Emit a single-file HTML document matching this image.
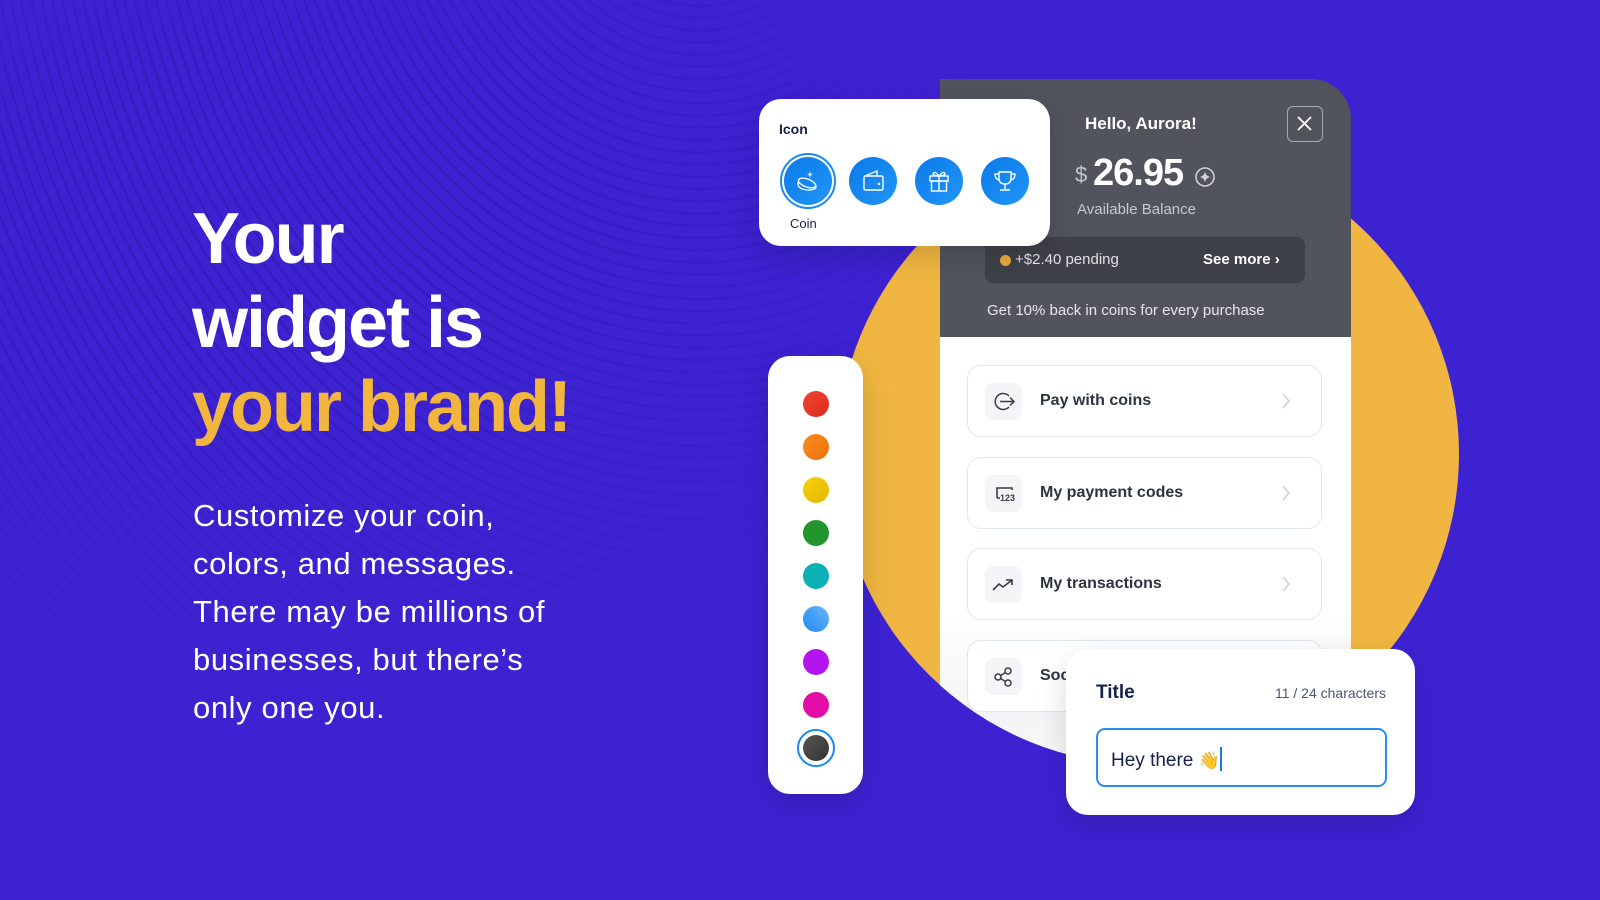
<!DOCTYPE html>
<html><head><meta charset="utf-8"><style>
*{box-sizing:border-box;margin:0;padding:0}
body{width:1600px;height:900px;overflow:hidden;position:relative;font-family:"Liberation Sans",sans-serif;
background:#3d22d2;}
.bg{position:absolute;inset:0;background:repeating-radial-gradient(ellipse at 700px -200px,rgba(30,15,120,.0) 0,rgba(30,15,120,.0) 7px,rgba(30,15,120,.35) 8px,rgba(30,15,120,.0) 10px);
-webkit-mask-image:radial-gradient(ellipse 750px 520px at 250px 200px,#000 30%,transparent 100%);mask-image:radial-gradient(ellipse 750px 520px at 250px 200px,#000 30%,transparent 100%)}
.h{position:absolute;left:192px;top:197px;font-size:72px;font-weight:bold;line-height:84px;letter-spacing:-2px;color:#fff}
.h .y{color:#f2b63f}
.p{position:absolute;left:193px;top:492px;font-size:31px;line-height:48px;color:#fff;width:385px;letter-spacing:.6px}
.circle{position:absolute;left:837px;top:143px;width:622px;height:622px;border-radius:50%;background:#f0b641;overflow:hidden}
.panel{position:absolute;left:940px;top:79px;width:411px;height:258px;border-radius:0 40px 0 0;overflow:hidden}
.head{position:absolute;left:0;top:0;width:100%;height:259px;background:#51535d;color:#fff}
.close{position:absolute;left:347px;top:27px;width:36px;height:36px;border:1.5px solid #a9abb2;border-radius:6px}
.item{position:absolute;left:967px;width:355px;height:72px;border:1.5px solid #e2e6ef;border-radius:14px;background:#fff}
.item .ic{position:absolute;left:17px;top:17px;width:37px;height:37px;border-radius:8px;background:#f5f5f7}
.item .t{position:absolute;left:72px;top:26px;font-size:16px;font-weight:bold;color:#2e3340}
.item .ch{position:absolute;right:30px;top:26px}
.card{position:absolute;background:#fff;border-radius:22px;box-shadow:0 10px 30px rgba(0,0,0,.15)}
.ib{position:absolute;top:58px;width:48px;height:48px;border-radius:50%;background:linear-gradient(135deg,#0b79e8,#2196f7)}
.dot{position:absolute;left:35px;width:26px;height:26px;border-radius:50%}
</style></head><body>
<div class="bg"></div>
<div class="h">Your<br>widget is<br><span class="y">your brand!</span></div>
<div class="p">Customize your coin, colors, and messages. There may be millions of businesses, but there’s only one you.</div>
<div class="circle"><div style="position:absolute;left:103px;top:194px;width:411px;height:500px;background:linear-gradient(#fff 0,#fff 55%,#f4f4f6 75%,#fff 100%)"></div></div>
<div class="panel">
 <div class="head">
  <div style="position:absolute;left:145px;top:35px;font-size:17px;font-weight:bold">Hello, Aurora!</div>
  <div class="close"><svg width="33" height="33" viewBox="0 0 33 33"><path d="M10 10L23 23M23 10L10 23" stroke="#fff" stroke-width="1.8"/></svg></div>
  <div style="position:absolute;left:135px;top:83px;font-size:22px;color:#c5c7cc">$</div>
  <div style="position:absolute;left:153px;top:73px;font-size:38px;font-weight:bold;letter-spacing:-1px">26.95</div>
  <svg style="position:absolute;left:254px;top:87px" width="22" height="22" viewBox="0 0 22 22"><circle cx="11" cy="11" r="9" fill="none" stroke="#d0d2d6" stroke-width="1.6"/><path d="M11 5.5Q11.8 10.2 16.5 11Q11.8 11.8 11 16.5Q10.2 11.8 5.5 11Q10.2 10.2 11 5.5Z" fill="#d0d2d6"/></svg>
  <div style="position:absolute;left:137px;top:122px;font-size:15px;color:#c8cace">Available Balance</div>
  <div style="position:absolute;left:45px;top:158px;width:320px;height:46px;border-radius:8px;background:#3f4149">
   <div style="position:absolute;left:15px;top:18px;width:11px;height:11px;border-radius:50%;background:#e9ad3c"></div>
   <div style="position:absolute;left:30px;top:14px;font-size:15px;color:#e3e4e7">+$2.40 pending</div>
   <div style="position:absolute;left:218px;top:14px;font-size:15px;font-weight:bold">See more ›</div>
  </div>
  <div style="position:absolute;left:47px;top:223px;font-size:15px;color:#e8e9ec">Get 10% back in coins for every purchase</div>
 </div>
</div>
<div class="item" style="top:365px"><div class="ic"><svg width="37" height="37" viewBox="0 0 37 37"><path d="M24 13A8 8 0 1 0 24 24" fill="none" stroke="#3a3d47" stroke-width="1.5"/><path d="M15 18.5H29M25 14.5L29 18.5L25 22.5" fill="none" stroke="#3a3d47" stroke-width="1.5"/></svg></div><div class="t">Pay with coins</div><svg class="ch" width="10" height="18"><path d="M2 2L8 9L2 16" fill="none" stroke="#c9cfdc" stroke-width="1.5"/></svg></div>
<div class="item" style="top:457px"><div class="ic"><svg width="37" height="37" viewBox="0 0 37 37"><path d="M12 23V13H27V15M12 23H15" fill="none" stroke="#3a3d47" stroke-width="1.6"/><text x="15" y="26" font-size="9" font-weight="bold" fill="#3a3d47" font-family="Liberation Sans">123</text></svg></div><div class="t">My payment codes</div><svg class="ch" width="10" height="18"><path d="M2 2L8 9L2 16" fill="none" stroke="#c9cfdc" stroke-width="1.5"/></svg></div>
<div class="item" style="top:548px"><div class="ic"><svg width="37" height="37" viewBox="0 0 37 37"><path d="M8 24L14 18L18 21L27 14M21 14H27V19" fill="none" stroke="#3a3d47" stroke-width="1.6"/></svg></div><div class="t">My transactions</div><svg class="ch" width="10" height="18"><path d="M2 2L8 9L2 16" fill="none" stroke="#c9cfdc" stroke-width="1.5"/></svg></div>
<div class="item" style="top:640px"><div class="ic"><svg width="37" height="37" viewBox="0 0 37 37"><circle cx="13" cy="19" r="3" fill="none" stroke="#3a3d47" stroke-width="1.5"/><circle cx="23" cy="13" r="3" fill="none" stroke="#3a3d47" stroke-width="1.5"/><circle cx="23" cy="25" r="3" fill="none" stroke="#3a3d47" stroke-width="1.5"/><path d="M15.6 17.5L20.4 14.5M15.6 20.5L20.4 23.5" stroke="#3a3d47" stroke-width="1.5"/></svg></div><div class="t">Social</div></div>
<div class="card" style="left:759px;top:99px;width:291px;height:147px">
 <div style="position:absolute;left:20px;top:22px;font-size:14px;font-weight:bold;color:#15234a">Icon</div>
 <div style="position:absolute;left:21px;top:54px;width:56px;height:56px;border-radius:50%;border:2px solid #1a8af2"></div>
 <div class="ib" style="left:25px"><svg width="48" height="48" viewBox="-1 -1 48 48"><ellipse cx="22" cy="25" rx="9" ry="4" transform="rotate(20 22 25)" fill="none" stroke="#fff" stroke-width="1.3"/><path d="M13 24V27Q14 31 22 32Q31 32 31 29V27" fill="none" stroke="#fff" stroke-width="1.3"/><path d="M25 13Q25.5 16 28 16.5Q25.5 17 25 20Q24.5 17 22 16.5Q24.5 16 25 13Z" fill="#bfe0ff"/></svg></div>
 <div class="ib" style="left:90px"><svg width="48" height="48" viewBox="-1 -1 48 48"><rect x="14" y="18" width="19" height="14" rx="1.5" fill="none" stroke="#fff" stroke-width="1.4"/><path d="M15 18L27 13V18" fill="none" stroke="#fff" stroke-width="1.4"/><circle cx="29" cy="26" r="1.2" fill="#fff"/></svg></div>
 <div class="ib" style="left:156px"><svg width="48" height="48" viewBox="-1 -1 48 48"><rect x="14" y="18" width="18" height="5" fill="none" stroke="#fff" stroke-width="1.4"/><rect x="15.5" y="23" width="15" height="10" fill="none" stroke="#fff" stroke-width="1.4"/><path d="M23 18V33M23 18Q18 12 17 16Q18 18 23 18Q28 12 29 16Q28 18 23 18" fill="none" stroke="#fff" stroke-width="1.4"/></svg></div>
 <div class="ib" style="left:222px"><svg width="48" height="48" viewBox="-1 -1 48 48"><path d="M17 14H29V20Q29 26 23 26Q17 26 17 20Z M17 16H13Q13 21 17 22M29 16H33Q33 21 29 22M23 26V31M18 32H28" fill="none" stroke="#fff" stroke-width="1.4"/></svg></div>
 <div style="position:absolute;left:31px;top:117px;font-size:13px;color:#15234a">Coin</div>
</div>
<div class="card" style="left:768px;top:356px;width:95px;height:438px">
 <div class="dot" style="top:35px;background:linear-gradient(135deg,#ef4632,#dd2a1c)"></div>
 <div class="dot" style="top:78px;background:linear-gradient(135deg,#f88c1e,#ec720e)"></div>
 <div class="dot" style="top:121px;background:linear-gradient(135deg,#f6d10a,#e6b701)"></div>
 <div class="dot" style="top:164px;background:#21962c"></div>
 <div class="dot" style="top:207px;background:#0cb0b5"></div>
 <div class="dot" style="top:250px;background:linear-gradient(45deg,#1f8af0,#6bb5fa)"></div>
 <div class="dot" style="top:293px;background:#b514ef"></div>
 <div class="dot" style="top:336px;background:#e40ca6"></div>
 <div style="position:absolute;left:29px;top:373px;width:38px;height:38px;border-radius:50%;border:2.5px solid #1a8af2"></div>
 <div class="dot" style="top:379px;background:linear-gradient(135deg,#555,#333)"></div>
</div>
<div class="card" style="left:1066px;top:649px;width:349px;height:166px">
 <div style="position:absolute;left:30px;top:33px;font-size:19px;font-weight:bold;color:#15234a">Title</div>
 <div style="position:absolute;right:29px;top:36px;font-size:14px;color:#4a5571">11 / 24 characters</div>
 <div style="position:absolute;left:30px;top:79px;width:291px;height:59px;border:2px solid #2a8df2;border-radius:9px">
  <div style="position:absolute;left:13px;top:17px;font-size:19px;color:#15234a">Hey there <span style="font-size:17px">👋</span><span style="display:inline-block;width:2px;height:24px;background:#1a7ae0;vertical-align:-5px"></span></div>
 </div>
</div>
</body></html>
